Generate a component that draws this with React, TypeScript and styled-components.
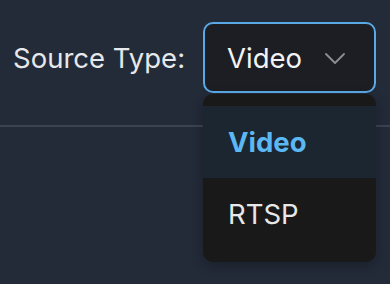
import styled, { createGlobalStyle } from "styled-components";

const GlobalStyle = createGlobalStyle`
    html, body {
        margin: 0;
        padding: 0;
        background: #232a38;
    }
    body {
        font-family: Inter, "Noto Sans", sans-serif;
    }
`;

const options = ["Video", "RTSP"];

export default function App() {
    const selected = "Video";
    return (
        <>
            <GlobalStyle />
            <Page>
                <Toolbar>
                    <Label>Source Type:</Label>
                    <SelectWrap>
                        <SelectButton>
                            <span>{selected}</span>
                            <svg width="20" height="11" viewBox="0 0 20 11" fill="none">
                                <path d="M1 1 L10 10 L19 1" stroke="#8b8e94" strokeWidth="1.8" strokeLinecap="round" strokeLinejoin="round" />
                            </svg>
                        </SelectButton>
                        <Menu>
                            {options.map((o) => (
                                <MenuItem key={o} $active={o === selected}>{o}</MenuItem>
                            ))}
                        </Menu>
                    </SelectWrap>
                </Toolbar>
                <Divider />
            </Page>
        </>
    );
}

const Page = styled.div`
    width: 390px;
    height: 284px;
    background: #232a38;
    overflow: hidden;
`;

const Toolbar = styled.div`
    display: flex;
    align-items: center;
    justify-content: space-between;
    padding: 22px 14px 0 13px;
    height: 71px;
    box-sizing: content-box;
`;

const Label = styled.span`
    color: #e6e8eb;
    font-size: 27.5px;
`;

const SelectWrap = styled.div`
    position: relative;
    width: 173px;
`;

const SelectButton = styled.div`
    box-sizing: border-box;
    height: 71px;
    width: 173px;
    display: flex;
    align-items: center;
    justify-content: space-between;
    padding: 0 29px 0 22px;
    background: #1c1e24;
    border: 2px solid #5aa9e6;
    border-radius: 10px;
    color: #f2f3f5;
    font-size: 27.5px;

    svg {
        margin-top: 2px;
    }
`;

const Menu = styled.div`
    position: absolute;
    top: 72px;
    left: 0;
    width: 173px;
    box-sizing: border-box;
    padding: 12px 0;
    background: #191919;
    border-radius: 10px;
    box-shadow: 0 4px 12px rgba(0, 0, 0, 0.25);
`;

const MenuItem = styled.div<{ $active?: boolean }>`
    height: 72px;
    display: flex;
    align-items: center;
    padding-left: 25px;
    font-size: 27.5px;
    font-weight: ${(p) => (p.$active ? 700 : 400)};
    color: ${(p) => (p.$active ? "#5cb8f4" : "#e8e8e8")};
    background: ${(p) => (p.$active ? "#1b2630" : "transparent")};
`;

const Divider = styled.div`
    margin-top: 32px;
    height: 2px;
    background: #3b4251;
`;
